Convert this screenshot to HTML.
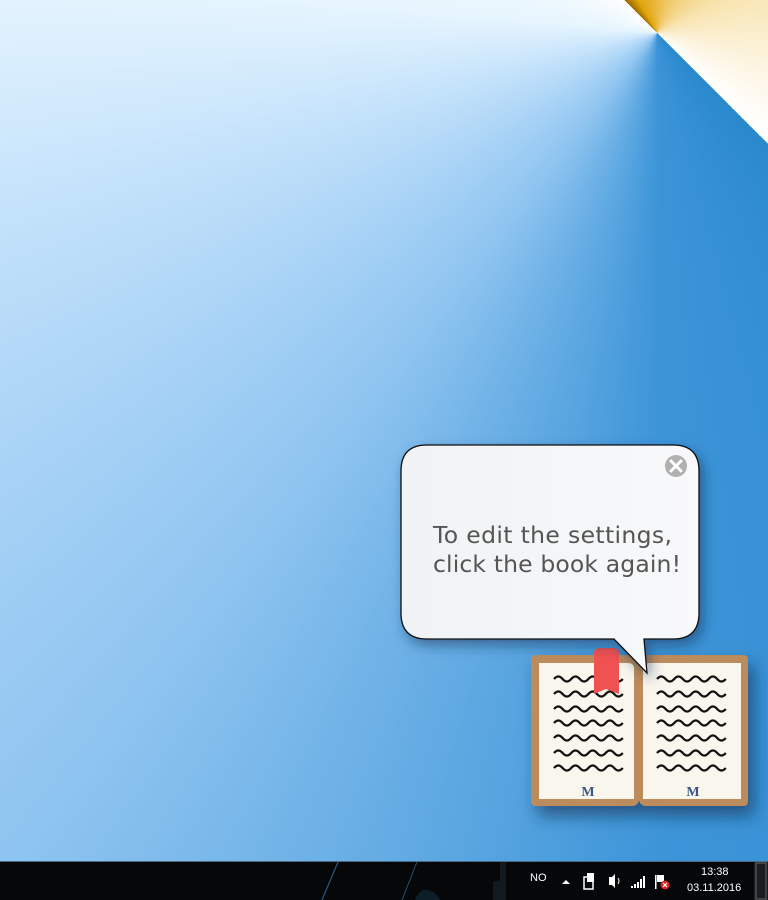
<!DOCTYPE html>
<html><head><style>
html,body{margin:0;padding:0;width:768px;height:900px;overflow:hidden}
body{position:relative;background:conic-gradient(from 135deg at 657px 33px,#2a88cc 0deg,#3d95d8 45deg,#8ec4f0 83deg,#c4e2fb 120deg,#e6f5fe 140deg,#ffffff 180deg,#9a6a00 180deg,#e0a40c 195deg,#efc560 240deg,#f8e4b0 290deg,#ffffff 360deg)}
.tb{position:absolute;left:0;top:861px;width:768px;height:39px;background:#050708;border-top:1px solid #4a6a88}
.t{position:absolute;color:#fff;font:11px "Liberation Sans",sans-serif}
.bub{position:absolute;left:0;top:0}
</style></head><body>
<svg class="bub" width="768" height="900">
<defs>
<filter id="sh" x="-20%" y="-20%" width="140%" height="140%"><feDropShadow dx="4" dy="6" stdDeviation="6" flood-color="#0a2a50" flood-opacity="0.5"/></filter>
<filter id="sh2" x="-20%" y="-20%" width="150%" height="150%"><feDropShadow dx="6" dy="10" stdDeviation="8" flood-color="#0a2a50" flood-opacity="0.6"/></filter>
<linearGradient id="bg" x1="0" x2="1"><stop offset="0" stop-color="#f0f2f4"/><stop offset="1" stop-color="#f8f9fa"/></linearGradient>
<path id="w" d="M0 0 q4.3 -5 8.6 0 t8.6 0 t8.6 0 t8.6 0 t8.6 0 t8.6 0 t8.6 0 t8.6 0" fill="none" stroke="#111" stroke-width="2.2"/>
</defs>
<g filter="url(#sh2)">
<path d="M537 655 H634 Q639 655 639 660 Q639 655 644 655 H743 Q748 655 748 660 V801 Q748 806 743 806 H647 Q640 806 639 800 Q638 806 631 806 H536 Q531 806 531 801 V660 Q531 655 537 655Z" fill="#bd8c5c"/>
</g>
<path d="M539 663 H628 Q634 663 634 669 V799 H539Z" fill="#f9f6ee"/>
<path d="M650 663 H741 V799 H643 V669 Q643 663 650 663Z" fill="#f9f6ee"/>
<g>
<use href="#w" x="554" y="679"/><use href="#w" x="554" y="694"/><use href="#w" x="554" y="709"/><use href="#w" x="554" y="723"/><use href="#w" x="554" y="738"/><use href="#w" x="554" y="753"/><use href="#w" x="554" y="768"/>
<use href="#w" x="657" y="679"/><use href="#w" x="657" y="694"/><use href="#w" x="657" y="709"/><use href="#w" x="657" y="723"/><use href="#w" x="657" y="738"/><use href="#w" x="657" y="753"/><use href="#w" x="657" y="768"/>
</g>
<path d="M600 648 H614 Q619 648 619 653 V694 L606 689 L594 694 V653 Q594 648 600 648Z" fill="#f05252"/>
<text x="588" y="796" font-family="Liberation Serif,serif" font-weight="bold" font-size="14" fill="#3d5585" text-anchor="middle">M</text>
<text x="693" y="796" font-family="Liberation Serif,serif" font-weight="bold" font-size="14" fill="#3d5585" text-anchor="middle">M</text>
<g filter="url(#sh)">
<path d="M427 445 H673 Q699 445 699 471 V613 Q699 639 673 639 H644 L647 673 L614 639 H427 Q401 639 401 613 V471 Q401 445 427 445Z" fill="url(#bg)" stroke="#111" stroke-width="1.3"/>
</g>
<circle cx="676" cy="466" r="11" fill="#b0b0b0"/>
<path d="M671 461 L681 471 M681 461 L671 471" stroke="#fff" stroke-width="3" stroke-linecap="round"/>
<text font-family="DejaVu Sans,sans-serif" font-size="23.5" fill="#555"><tspan x="433" y="543" textLength="239" lengthAdjust="spacing">To edit the settings,</tspan><tspan x="433" y="572" textLength="248" lengthAdjust="spacing">click the book again!</tspan></text>
</svg>
<div class="tb"></div>
<svg style="position:absolute;left:0;top:862px" width="768" height="38">
<path d="M338 0 L322 38" stroke="#2a5a78" stroke-width="1.2"/>
<path d="M417 0 L402 38" stroke="#24506a" stroke-width="1"/>
<path d="M415 38 Q420 26 428 28 Q436 30 440 38Z" fill="#0e1e28"/>
<path d="M493 38 V20 L500 18 V0 H506 V38Z" fill="#121a20"/>
<rect x="754" y="0" width="14" height="38" fill="#1a1e22"/>
<rect x="756" y="1" width="10" height="36" fill="none" stroke="#666" stroke-width="1"/>
<path d="M562 884 l4 -4 l4 4z" transform="translate(0,-862)" fill="#fff"/>
<rect x="584" y="15" width="9" height="12" fill="none" stroke="#fff" stroke-width="1.5"/>
<rect x="587" y="11" width="7" height="9" fill="#fff"/>
<path d="M609 15 h3 l3 -3 v14 l-3 -3 h-3z" fill="#fff"/>
<path d="M618 16 q2 3 0 6" stroke="#fff" fill="none"/>
<rect x="631" y="24" width="2" height="2" fill="#fff"/><rect x="634" y="22" width="2" height="4" fill="#fff"/><rect x="637" y="20" width="2" height="6" fill="#fff"/><rect x="640" y="17" width="2" height="9" fill="#fff"/><rect x="643" y="14" width="2" height="12" fill="#fff"/>
<rect x="655" y="13" width="1.5" height="14" fill="#fff"/>
<path d="M657 13 h7 v7 h-7z" fill="#fff"/>
<circle cx="665" cy="23" r="4.5" fill="#e02020"/>
<path d="M663 21 l4 4 m0 -4 l-4 4" stroke="#fff" stroke-width="1.2"/>
</svg>
<div class="t" style="left:530px;top:872px">NO</div>
<div class="t" style="left:701px;top:866px">13:38</div>
<div class="t" style="left:687px;top:882px">03.11.2016</div>
</body></html>
